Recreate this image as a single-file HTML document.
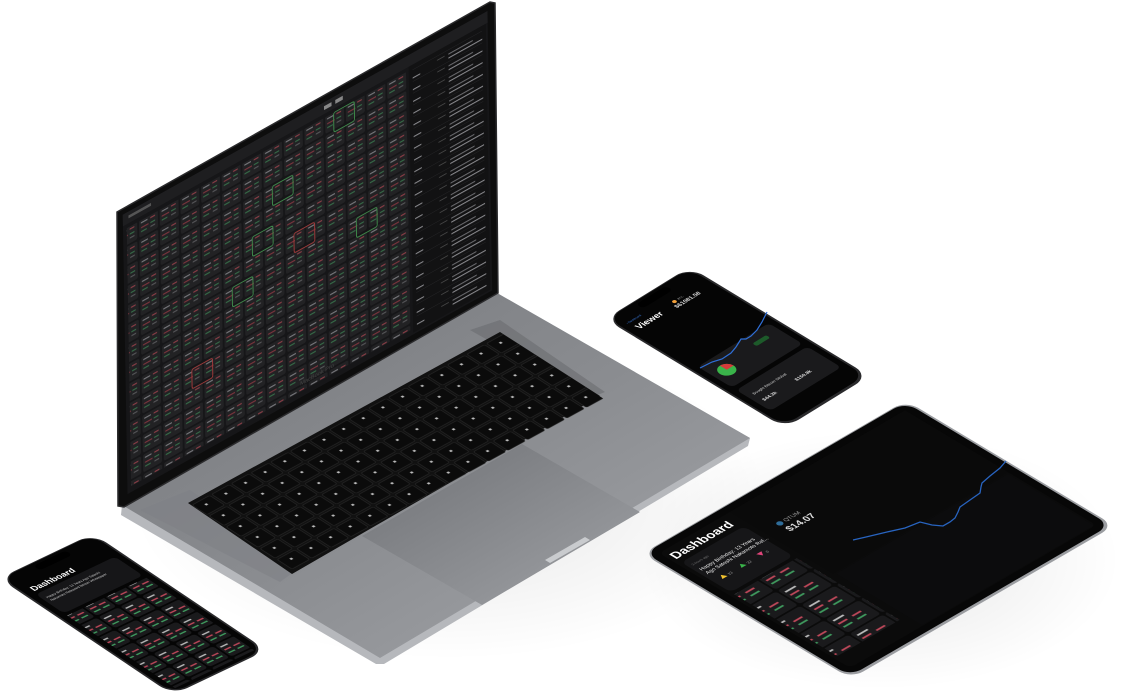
<!DOCTYPE html>
<html><head><meta charset="utf-8"><style>
html,body{margin:0;padding:0;background:#fff;width:1142px;height:696px;overflow:hidden}
svg{display:block}
text{font-family:"Liberation Sans",sans-serif}
</style></head><body>
<svg width="1142" height="696" viewBox="0 0 1142 696" xmlns="http://www.w3.org/2000/svg">
<defs>
<linearGradient id="base" x1="0" y1="0" x2="1" y2="1">
<stop offset="0" stop-color="#76787c"/><stop offset="0.5" stop-color="#8a8c90"/><stop offset="1" stop-color="#a6a8ac"/>
</linearGradient>
<linearGradient id="pad" x1="0" y1="0" x2="1" y2="1">
<stop offset="0" stop-color="#6f7175"/><stop offset="1" stop-color="#a0a2a6"/>
</linearGradient>
<radialGradient id="sh" cx="0.5" cy="0.5" r="0.5"><stop offset="0" stop-color="#000" stop-opacity="0.10"/><stop offset="1" stop-color="#000" stop-opacity="0"/></radialGradient>
<pattern id="cells" width="22" height="20" patternUnits="userSpaceOnUse">
<rect x="1" y="1" width="20" height="18" rx="2" fill="#222224"/>
<rect x="3" y="4" width="7" height="1.3" fill="#77777b"/>
<rect x="13" y="4" width="5" height="1.3" fill="#8a3d46"/>
<rect x="3" y="9" width="8" height="1.3" fill="#7a343d"/>
<rect x="13" y="9" width="5" height="1.3" fill="#356a47"/>
<rect x="3" y="13" width="6" height="1.3" fill="#356a47"/>
<rect x="13" y="13" width="5" height="1.3" fill="#555558"/>
</pattern>
<pattern id="list" width="70" height="12" patternUnits="userSpaceOnUse">
<rect x="2" y="3" width="26" height="1.2" fill="#6a6a6e"/>
<rect x="2" y="7" width="40" height="1.2" fill="#8a8a8e"/>
<rect x="60" y="3" width="8" height="1" fill="#444"/>
<rect x="0" y="11" width="70" height="0.4" fill="#2a2a2c"/>
</pattern>
<pattern id="keys" width="19" height="17" patternUnits="userSpaceOnUse">
<rect x="1" y="1" width="17" height="15" rx="1.5" fill="#0b0b0b" stroke="#262626" stroke-width="0.6"/>
<rect x="8" y="6" width="2" height="2" fill="#bbb"/>
</pattern>
<pattern id="tcells" width="40" height="28" patternUnits="userSpaceOnUse">
<rect x="1" y="1" width="38" height="26" rx="3" fill="#1a1a1c"/>
<rect x="4" y="6" width="12" height="2" fill="#bbb"/>
<rect x="4" y="12" width="10" height="2" fill="#c0485a"/>
<rect x="20" y="12" width="10" height="2" fill="#c0485a"/>
<rect x="4" y="18" width="10" height="2" fill="#3f9a5e"/>
<rect x="20" y="18" width="10" height="2" fill="#3f9a5e"/>
</pattern>
<pattern id="pcells" width="24" height="22" patternUnits="userSpaceOnUse">
<rect x="1" y="1" width="22" height="20" rx="3" fill="#1a1a1c"/>
<rect x="3" y="5" width="8" height="1.6" fill="#bbb"/>
<rect x="3" y="10" width="7" height="1.6" fill="#c0485a"/>
<rect x="13" y="10" width="7" height="1.6" fill="#c0485a"/>
<rect x="3" y="15" width="7" height="1.6" fill="#3f9a5e"/>
<rect x="13" y="15" width="7" height="1.6" fill="#3f9a5e"/>
</pattern>
</defs>

<ellipse cx="450" cy="500" rx="320" ry="160" fill="url(#sh)"/>
<ellipse cx="880" cy="560" rx="240" ry="130" fill="url(#sh)"/>

<!-- LAPTOP BASE -->
<polygon points="122,505 497,293 750,438 748,446 384,664 376,664 121,515" fill="#b6b8bc"/>
<polygon points="122,505 497,293 750,438 380,658" fill="url(#base)"/>
<polygon points="140,510 190,490 302,566 280,582" fill="#7f8185" opacity="0.6"/>
<polygon points="470,330 500,320 605,392 590,398" fill="#6a6c70" opacity="0.6"/>
<polygon points="188,503 500,332 600,396 292,574" fill="#111"/>
<g transform="matrix(1.033,-0.567,1.0,0.64,190,505)">
<rect x="0" y="0" width="302" height="102" fill="url(#keys)"/>
</g>
<polygon points="362,536 522,444 640,512 482,605" fill="url(#pad)"/>
<polygon points="545,560 585,537 590,540 550,563" fill="#c9cbce"/>

<!-- LAPTOP LID -->
<polygon points="117,212 490,2 495,3 498,293 124,507 118,506" fill="#0d0d0d" stroke="#2b2b2d" stroke-width="1.5"/>
<g transform="matrix(0.94,-0.525,0.0167,0.977,117,212)">
<rect x="6" y="6" width="388" height="286" fill="#161618"/>
<rect x="6" y="6" width="388" height="12" fill="#1e1e20"/>
<rect x="12" y="10" width="24" height="3" fill="#555"/>
<rect x="220" y="10" width="8" height="4" fill="#888"/>
<rect x="232" y="10" width="8" height="4" fill="#888"/>
<rect x="10" y="22" width="298" height="264" fill="url(#cells)"/>
<rect x="230" y="22" width="22" height="20" rx="2" fill="none" stroke="#3f8a4a" stroke-width="1"/>
<rect x="164" y="62" width="22" height="20" rx="2" fill="none" stroke="#3f8a4a" stroke-width="1"/>
<rect x="142" y="102" width="22" height="20" rx="2" fill="none" stroke="#3f8a4a" stroke-width="1"/>
<rect x="120" y="142" width="22" height="20" rx="2" fill="none" stroke="#3f8a4a" stroke-width="1"/>
<rect x="186" y="122" width="22" height="20" rx="2" fill="none" stroke="#a03a3a" stroke-width="1"/>
<rect x="76" y="202" width="22" height="20" rx="2" fill="none" stroke="#a03a3a" stroke-width="1"/>
<rect x="252" y="142" width="22" height="20" rx="2" fill="none" stroke="#3f8a4a" stroke-width="1"/>
<rect x="310" y="18" width="82" height="272" fill="#121213"/>
<rect x="314" y="22" width="74" height="264" fill="url(#list)"/>
<text x="190" y="280" font-size="6" fill="#444">MacBook Pro</text>
</g>

<!-- RIGHT PHONE -->
<g transform="matrix(0.853,-0.526,0.856,0.519,607,318)">
<rect x="-2" y="0" width="99" height="210" rx="16" fill="#2a2a2c"/>
<rect x="0" y="1" width="95" height="206" rx="14" fill="#050505"/>
<rect x="30" y="4" width="35" height="8" rx="4" fill="#000"/>
<text x="8" y="30" font-size="9" font-weight="bold" fill="#fff">Viewer</text>
<text x="6" y="18" font-size="3" fill="#3b7be0">‹ Dashboard</text>
<circle cx="55" cy="24" r="2" fill="#f3a13b"/>
<text x="59" y="25" font-size="3" fill="#aaa">BTC</text>
<text x="50" y="32" font-size="6" font-weight="bold" fill="#ddd">$61081.58</text>
<rect x="6" y="100" width="83" height="40" rx="5" fill="#1a1a1c"/>
<circle cx="20" cy="120" r="8" fill="#3ab44a"/>
<path d="M20 112 A8 8 0 0 1 28 120 L20 120Z" fill="#d63a3a"/>
<rect x="6" y="145" width="83" height="40" rx="5" fill="#1a1a1c"/>
<text x="12" y="160" font-size="4" fill="#ccc">Bought Bitcoin Global</text>
<text x="12" y="172" font-size="5" font-weight="bold" fill="#ddd">$44.3k</text>
<text x="50" y="172" font-size="5" font-weight="bold" fill="#ddd">$150.8k</text>
<rect x="60" y="110" width="16" height="5" rx="2" fill="#1d5a2a"/>
</g>
<polyline points="700,368 712,362 722,359 731,353 736,347 741,339 746,339 751,336 757,330 762,322 765,316 767,312" fill="none" stroke="#2f6fd8" stroke-width="1.2"/>

<!-- TABLET -->
<g transform="matrix(0.867,-0.503,0.858,0.515,645,553)">
<rect x="-2" y="-1" width="304" height="243" rx="14" fill="#9b9da1"/>
<rect x="0" y="0" width="300" height="239" rx="13" fill="#070707"/>
<rect x="8" y="8" width="284" height="223" rx="6" fill="#0b0b0b"/>
<rect x="90" y="8" width="202" height="120" fill="#0a0a0a"/>
<text x="12" y="24" font-size="13" font-weight="bold" fill="#fff">Dashboard</text>
<rect x="12" y="30" width="72" height="58" rx="6" fill="#161618"/>
<text x="16" y="40" font-size="3.5" fill="#777">3 hours ago</text>
<text x="16" y="50" font-size="5.5" fill="#eee">Happy Birthday: 13 Years</text>
<text x="16" y="57" font-size="5.5" fill="#eee">Ago Satoshi Nakamoto Rel...</text>
<path d="M20 70 l3 -5 l3 5z" fill="#f4c430"/>
<text x="28" y="70" font-size="4" fill="#aaa">13</text>
<path d="M42 70 l3 -5 l3 5z" fill="#3ab44a"/>
<text x="50" y="70" font-size="4" fill="#aaa">32</text>
<path d="M64 65 l3 5 l3 -5z" fill="#e0457a"/>
<text x="72" y="70" font-size="4" fill="#aaa">0</text>
<rect x="12" y="92" width="72" height="120" fill="url(#tcells)"/>
<rect x="92" y="130" width="198" height="100" fill="#0c0c0d"/>
<circle cx="108" cy="48" r="3" fill="#2f6d9a"/>
<text x="113" y="50" font-size="6" fill="#999">QTUM</text>
<text x="106" y="62" font-size="10" font-weight="bold" fill="#ddd">$14.07</text>
</g>
<polyline points="853,540 866,537 887,532 905,528 920,522 932,525 943,526 950,522 955,518 958,512 960,507 970,500 980,493 981,487 982,483 990,476 1000,468 1006,461" fill="none" stroke="#2864c0" stroke-width="1.3"/>

<!-- LEFT PHONE -->
<g transform="matrix(0.9,-0.43,0.83,0.558,2,578)">
<rect x="-2" y="-1" width="104" height="209" rx="16" fill="#2a2a2c"/>
<rect x="0" y="0" width="100" height="206" rx="14" fill="#050505"/>
<rect x="32" y="3" width="36" height="8" rx="4" fill="#000"/>
<text x="8" y="30" font-size="9" font-weight="bold" fill="#fff">Dashboard</text>
<rect x="6" y="34" width="88" height="34" rx="5" fill="#161618"/>
<text x="10" y="44" font-size="3.5" fill="#ccc">Happy Birthday: 13 Years Ago Satoshi</text>
<text x="10" y="49" font-size="3.5" fill="#ccc">Nakamoto Released Bitcoin Whitepaper</text>
<rect x="6" y="72" width="88" height="130" fill="url(#pcells)"/>
</g>
</svg>
</body></html>
